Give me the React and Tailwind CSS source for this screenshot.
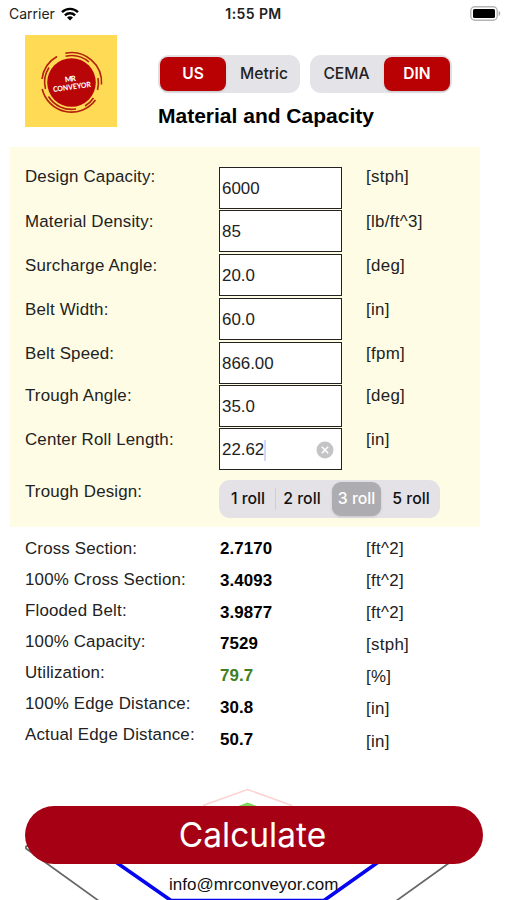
import { useState } from 'react'
import clsx from 'clsx'

// ── Data ────────────────────────────────────────────────────────────────────
const FIELDS = [
  { id: 'capacity', label: 'Design Capacity:', value: '6000', unit: '[stph]', textH: 'h-[45px]', boxH: 'h-[43px]' },
  { id: 'density', label: 'Material Density:', value: '85', unit: '[lb/ft^3]', textH: 'h-[44px]', boxH: 'h-[44px]' },
  { id: 'surcharge', label: 'Surcharge Angle:', value: '20.0', unit: '[deg]', textH: 'h-[44px]', boxH: 'h-[44px]' },
  { id: 'width', label: 'Belt Width:', value: '60.0', unit: '[in]', textH: 'h-[44px]', boxH: 'h-[44px]' },
  { id: 'speed', label: 'Belt Speed:', value: '866.00', unit: '[fpm]', textH: 'h-[42px]', boxH: 'h-[43px]' },
  { id: 'trough', label: 'Trough Angle:', value: '35.0', unit: '[deg]', textH: 'h-[44px]', boxH: 'h-[43px]' },
  { id: 'roll', label: 'Center Roll Length:', value: '22.62', unit: '[in]', textH: 'h-[52px]', boxH: 'h-[52px]', active: true },
]

const RESULTS = [
  { label: 'Cross Section:', value: '2.7170', unit: '[ft^2]' },
  { label: '100% Cross Section:', value: '3.4093', unit: '[ft^2]' },
  { label: 'Flooded Belt:', value: '3.9877', unit: '[ft^2]' },
  { label: '100% Capacity:', value: '7529', unit: '[stph]' },
  { label: 'Utilization:', value: '79.7', unit: '[%]', good: true },
  { label: '100% Edge Distance:', value: '30.8', unit: '[in]' },
  { label: 'Actual Edge Distance:', value: '50.7', unit: '[in]' },
]

const ROLLS = ['1 roll', '2 roll', '3 roll', '5 roll']

export default function App() {
  const [units, setUnits] = useState('US')
  const [standard, setStandard] = useState('DIN')
  const [roll, setRoll] = useState('3 roll')

  return (
    <main className="flex h-[900px] w-[507px] flex-col overflow-hidden bg-white font-['Liberation_Sans',Arial,sans-serif] text-[16.9px] text-[#222]">
      <StatusBar />

      {/* Header */}
      <header className="flex h-[120px] pt-[8px] pl-[25px]">
        <Logo />
        <div className="ml-[41px] pt-[20px]">
          <div className="flex gap-[10px]">
            <Toggle options={['US', 'Metric']} value={units} onChange={setUnits} />
            <Toggle options={['CEMA', 'DIN']} value={standard} onChange={setStandard} />
          </div>
          <h1 className="mt-[10px] text-[21px] leading-[26px] font-bold whitespace-nowrap text-black">Material and Capacity</h1>
        </div>
      </header>

      {/* Inputs */}
      <section className="ml-[10px] flex h-[380px] w-[470px] bg-[#fefce5] pl-[15px]">
        <div className="w-[194px] pt-[20px] tracking-[0.17px]">
          {FIELDS.map(f => (
            <label key={f.id} htmlFor={f.id} className={clsx('block leading-[20px] whitespace-nowrap', f.textH)}>{f.label}</label>
          ))}
          <p className="leading-[20px]">Trough Design:</p>
        </div>

        <div className="w-[147px] pt-[20px]">
          {FIELDS.map(f => (
            <div key={f.id} className={f.boxH}>
              <div className="flex h-[42px] w-[123px] items-center border-[1.5px] border-[#222] bg-white pt-[2px] pl-[2px]">
                {f.active ? (
                  <>
                    <span id={f.id}>{f.value}</span>
                    <span className="h-[21px] w-[2px] bg-[#d3d8fb]" />
                    <ClearIcon />
                  </>
                ) : (
                  <span id={f.id}>{f.value}</span>
                )}
              </div>
            </div>
          ))}
          <div className="flex h-[38px] w-[221px] items-center rounded-[11px] bg-[#e4e2e6] p-[2px] font-[Inter] text-[15.8px] font-medium text-[#111]">
            {ROLLS.map(r => (
              <button
                key={r}
                onClick={() => setRoll(r)}
                className={clsx(
                  'h-[34px] shrink-0 whitespace-nowrap',
                  r === roll ? 'mx-[3px] w-[49px] rounded-[9px] bg-[#adacb0] text-white shadow-sm' : 'w-[54px]',
                  r === '2 roll' && roll !== r && 'bg-[linear-gradient(#cfcdd2,#cfcdd2)] bg-[length:1px_22px] bg-left bg-no-repeat'
                )}
              >
                {r}
              </button>
            ))}
          </div>
        </div>

        <div className="pt-[20px] tracking-[0.3px]">
          {FIELDS.map(f => (
            <p key={f.id} className={clsx('leading-[20px]', f.textH)}>{f.unit}</p>
          ))}
        </div>
      </section>

      {/* Results */}
      <section className="flex h-[261px] pt-[6px] pl-[25px]">
        <div className="w-[195px] leading-[31px] tracking-[0.17px] whitespace-nowrap">
          {RESULTS.map(r => <p key={r.label}>{r.label}</p>)}
        </div>
        <div className="w-[146px] leading-[31.8px] font-bold tracking-[0.1px] text-black">
          {RESULTS.map(r => <p key={r.label} className={r.good ? 'text-[#417f22]' : ''}>{r.value}</p>)}
        </div>
        <div className="leading-[32.1px] tracking-[0.3px]">
          {RESULTS.map(r => <p key={r.label}>{r.unit}</p>)}
        </div>
      </section>

      {/* Action + belt profile behind it */}
      <footer className="relative flex h-[112px] flex-col items-start pt-[18px] pl-[25px]">
        <BeltProfile />
        <button className="relative h-[58px] w-[458px] rounded-full bg-[#a60014] pr-[3px] font-[Inter] text-[33.5px] text-white">
          Calculate
        </button>
        <p className="relative mt-[11px] ml-[144px] text-[17px] leading-[20px] text-[#111]">info@mrconveyor.com</p>
      </footer>
    </main>
  )
}

function StatusBar() {
  return (
    <div className="grid h-[27px] grid-cols-3 items-center pr-[6px] pl-[9px] font-[Inter] text-[14px]">
      <div className="flex items-center gap-[6px]">
        <span>Carrier</span>
        <svg width="18" height="14" viewBox="0 0 18 14" fill="none" stroke="#000" strokeWidth="2.4">
          <path d="M1 5.2a11.3 11.3 0 0 1 16 0" />
          <path d="M3.9 8.4a7.2 7.2 0 0 1 10.2 0" />
          <path d="M9 13.5 6 10.6a4.4 4.4 0 0 1 6 0z" fill="#000" stroke="none" />
        </svg>
      </div>
      <span className="pr-[3px] text-center font-semibold tracking-[0.4px] whitespace-nowrap">1:55 PM</span>
      <svg className="justify-self-end" width="31" height="15" viewBox="0 0 31 15">
        <rect x=".8" y=".8" width="26.4" height="13.4" rx="4" fill="#fff" stroke="#b5b5b5" strokeWidth="1.4" />
        <rect x="3" y="3" width="22" height="9" rx="1.5" fill="#000" />
        <path d="M28.6 5v5c1-.3 1.7-1.3 1.7-2.5s-.7-2.2-1.7-2.5z" fill="#aaa" />
      </svg>
    </div>
  )
}

function Logo() {
  return (
    <svg className="h-[92px] w-[92px]" viewBox="0 0 92 92">
      <rect width="92" height="92" fill="#ffda55" />
      <circle cx="46.5" cy="47.5" r="24.3" fill="#b80508" />
      <g fill="none" stroke="#b3200c" strokeWidth="1.6">
        <path d="M40.3 18.2A30 30 0 0 1 76.5 49.5" />
        <path d="M40.6 21.2A27 27 0 0 1 64 27" />
        <path d="M32 21.5A30 30 0 0 0 17 44" />
        <path d="M24 32.5A27 27 0 0 0 20.5 54" />
        <path d="M17.2 54A30 30 0 0 0 70.5 65" />
        <path d="M23.5 61.5A27.2 27.2 0 0 0 51 74" />
        <path d="M60 71A27 27 0 0 0 68.5 63" />
        <path d="M73 43A27 27 0 0 1 72.5 55" />
      </g>
      <g transform="rotate(-8 46.5 48.5)" fill="#fff" fontFamily="Lato, sans-serif" fontWeight="900" textAnchor="middle">
        <text x="46" y="46.5" fontSize="7.5" textLength="11">MR</text>
        <text x="46.5" y="54.5" fontSize="7.5" textLength="38" lengthAdjust="spacingAndGlyphs">CONVEYOR</text>
      </g>
    </svg>
  )
}

function Toggle({ options, value, onChange }) {
  return (
    <div className="flex h-[38px] w-[142px] rounded-[11px] bg-[#e4e3e8] p-[2px] font-[Inter] text-[15.6px]">
      {options.map((o, i) => (
        <button
          key={o}
          onClick={() => onChange(o)}
          className={clsx(
            'rounded-[8px]',
            o === value ? 'w-[66px] bg-[#b90003] font-semibold text-white shadow-sm' : 'flex-1 font-medium text-[#222]',
            o !== value && (i === 0 ? 'pr-[3px]' : 'pl-[4px]')
          )}
        >
          {o}
        </button>
      ))}
    </div>
  )
}

function ClearIcon() {
  return (
    <svg className="mr-[7px] ml-auto" width="18" height="18" viewBox="0 0 18 18">
      <circle cx="9" cy="9" r="8.5" fill="#c4c4c6" />
      <path d="m5.8 5.8 6.4 6.4m0-6.4-6.4 6.4" stroke="#fff" strokeWidth="1.5" />
    </svg>
  )
}

// Trough cross section: belt in blue, material in green/pink, frame in gray
function BeltProfile() {
  return (
    <svg className="absolute top-0 left-0" width="507" height="112" viewBox="0 0 507 112" fill="none">
      <path d="M203 17.5 247.5 1.5 292 17.5" stroke="#fbd3d3" strokeWidth="1.5" />
      <path d="M232 20.5 247.5 14.5 263 20.5z" fill="#7fd65c" />
      <path d="M34 54 26 58.5v2L99 113M449 75 396 113" stroke="#666" strokeWidth="1.7" />
      <path d="M110 70 171 112.5H324L384 70" stroke="#0505f0" strokeWidth="3.6" />
    </svg>
  )
}
